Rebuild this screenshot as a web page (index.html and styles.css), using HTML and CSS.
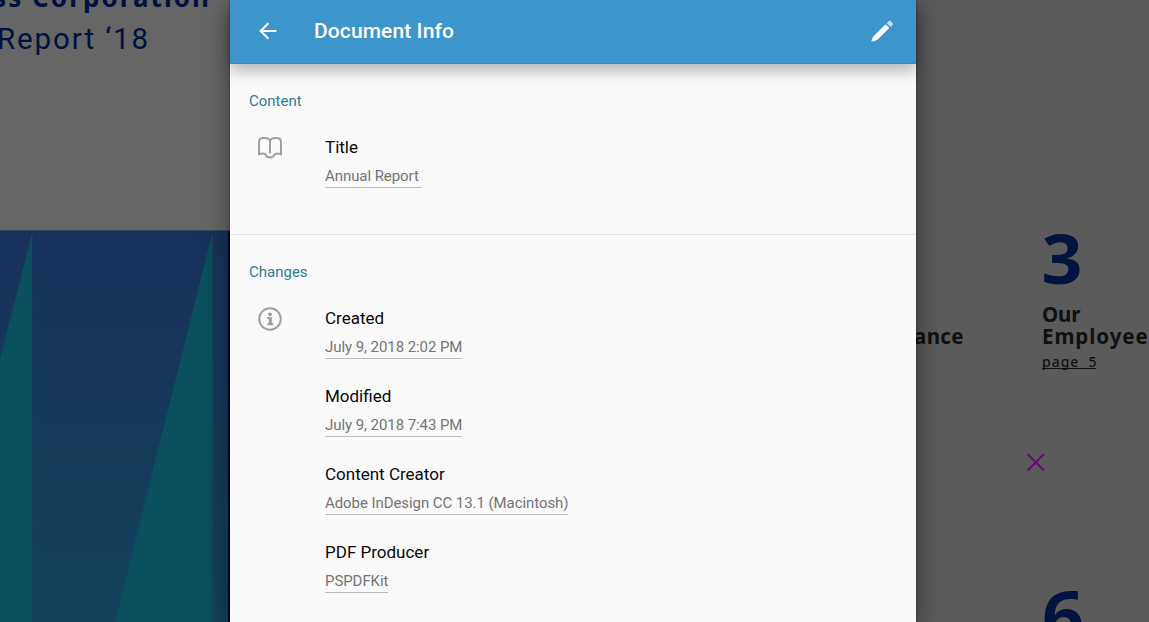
FILE: index.html
```html
<!DOCTYPE html>
<html lang="en">
<head>
<meta charset="utf-8">
<title>Document Info</title>
<link rel="stylesheet" href="styles.css">
</head>
<body>
<div class="screen">
  <svg class="document" viewBox="0 0 1149 622" aria-hidden="true">
    <defs>
      <linearGradient id="cover" x1="0" y1="0" x2="0" y2="1">
        <stop offset="0" stop-color="#19325c"/>
        <stop offset="1" stop-color="#12425b"/>
      </linearGradient>
    </defs>
    <rect width="573" height="622" fill="#666"/>
    <rect x="573" width="576" height="622" fill="#5b5b5b"/>
    <rect y="231" width="229" height="391" fill="url(#cover)"/>
    <rect y="230.400" width="229" height="1.400" fill="#0c3b57"/>
    <rect x="228" y="231" width="2" height="391" fill="#06062e"/>
    <path d="M32.3 232V622H0V359Z M212.5 232V622H115Z" fill="#0b505d"/>
    <text class="doc-text doc-company" x="-7" y="7" textLength="216">ss Corporation</text>
    <text class="doc-text doc-report" x="-3" y="49" textLength="151">Report ‘18</text>
    <text class="doc-text doc-number" x="1041.5" y="283.500" textLength="41" lengthAdjust="spacingAndGlyphs">3</text>
    <text class="doc-text doc-heading" x="914" y="344" textLength="49.500">ance</text>
    <text class="doc-text doc-heading" x="1042" y="322" textLength="38.500">Our</text>
    <text class="doc-text doc-heading" x="1042" y="344" textLength="117">Employees</text>
    <text class="doc-text doc-page" x="1042" y="367" textLength="54.500">page&#160; 5</text>
    <path d="M1042 368.500h54" stroke="#101010" stroke-width="1"/>
    <path d="M1027.5 454l16.5 16.5M1044 454l-16.5 16.5" stroke="#640a70" stroke-width="1.8"/>
    <text class="doc-text doc-number" x="1042" y="640.500" textLength="42" lengthAdjust="spacingAndGlyphs">6</text>
  </svg>
  <main class="panel">
    <header class="toolbar">
      <svg class="back" viewBox="0 0 18 18"><path d="M17.4 9H1.8M9.4 1.2L1.6 9l7.8 7.8"/></svg>
      <h1 class="heading">Document Info</h1>
      <svg class="edit" viewBox="0 0 24 24"><path fill="#fff" d="M1.700 22.400c-.6-.5.900-4.300 2.100-5.500L14.800 5.900a1.200 1.200 0 0 1 1.700 0l2.100 2.100a1.200 1.200 0 0 1 0 1.700L7.600 20.500c-1.500 1.200-5.300 2.500-5.900 1.900z"/><path fill="#bfe2f5" d="M16.800 4.200l1.900-2.300q.8-.8 1.700 0l2.300 2.300q.8.8 0 1.700l-2.100 2z"/></svg>
    </header>
    <section class="section section-content">
      <h2 class="section-title">Content</h2>
      <div class="section-body">
        <svg class="icon" viewBox="0 0 26 24"><path d="M13 16.500V5C12 1.400 9 2 6.500 2S2 3 2 6v12.500c1-1.300 5-1.400 6.400-.1.800 2 2 3 4.600 3s3.800-1 4.600-3c1.400-1.300 5.400-1.200 6.400.1V6c0-3-2-4-4.500-4S14 1.400 13 5"/></svg>
        <dl class="fields">
          <div class="field"><dt class="label">Title</dt><dd class="value value-title">Annual Report</dd></div>
        </dl>
      </div>
    </section>
    <section class="section">
      <h2 class="section-title">Changes</h2>
      <div class="section-body">
        <svg class="icon" viewBox="0 0 26 24"><circle cx="13" cy="12" r="10.8"/><circle class="solid" cx="13" cy="7.300" r="1.900"/><path class="solid" d="M10.300 10.100h4.500v6.200h1.400v1.900h-6v-1.900h1.700v-4.200h-1.600z"/></svg>
        <dl class="fields">
          <div class="field"><dt class="label">Created</dt><dd class="value">July 9, 2018 2:02 PM</dd></div>
          <div class="field"><dt class="label">Modified</dt><dd class="value">July 9, 2018 7:43 PM</dd></div>
          <div class="field"><dt class="label">Content Creator</dt><dd class="value">Adobe InDesign CC 13.1 (Macintosh)</dd></div>
          <div class="field"><dt class="label">PDF Producer</dt><dd class="value">PSPDFKit</dd></div>
        </dl>
      </div>
    </section>
  </main>
</div>
</body>
</html>
```

FILE: styles.css
```css
* { box-sizing: border-box; }
body { margin: 0; overflow: hidden; font-family: Roboto, sans-serif; }
h1, h2, dl, dd { margin: 0; }

.screen { display: grid; width: 1149px; height: 622px; overflow: hidden; }
.document { grid-area: 1 / 1; width: 1149px; height: 622px; }
.doc-text { font-family: "Noto Sans", "Open Sans", sans-serif; }
.doc-company { font-size: 26px; font-weight: 700; fill: #00113f; }
.doc-report { font-family: Roboto, sans-serif; font-size: 29.5px; font-weight: 400; fill: #00113f; }
.doc-number { font-size: 69px; font-weight: 700; fill: #00143f; }
.doc-heading { font-size: 20.5px; font-weight: 700; fill: #101010; }
.doc-page { font-size: 14px; font-weight: 500; fill: #101010; }

.panel {
  grid-area: 1 / 1;
  width: 686px;
  height: 622px;
  margin-left: 230px;
  z-index: 1;
  background: #fafafa;
  box-shadow: 0 0 2px rgba(0, 0, 0, .5), 0 8px 26px rgba(0, 0, 0, .4);
}

.toolbar {
  display: flex;
  align-items: center;
  height: 64px;
  padding: 0 22px 2px 29px;
  background: #3c96cb;
  border-bottom: 1px solid #318bc3;
  box-shadow: 0 7px 14px rgba(0, 0, 0, .28);
}
.back { width: 18px; height: 18px; fill: none; stroke: #fff; stroke-width: 2; }
.heading { margin-left: 37px; color: #fff; font-size: 21px; line-height: 28px; font-weight: 500; letter-spacing: .1px; }
.edit { width: 24px; height: 24px; margin-left: auto; }

.section { padding: 27px 19px 0; }
.section-content { height: 171px; border-bottom: 1px solid #e3e3e3; }
.section-title { color: #327a99; font-size: 15px; line-height: 20px; font-weight: 400; }
.section-body { display: flex; padding: 25px 0 0 8px; }
.icon { width: 26px; height: 24px; fill: none; stroke: #a0a0a0; stroke-width: 2; stroke-linejoin: round; stroke-linecap: round; }
.solid { fill: #9e9e9e; stroke: none; }
.fields { margin: -1px 0 0 42px; }
.field { height: 78px; }
.label { color: #080808; font-size: 17px; line-height: 24px; }
.value { width: fit-content; height: 29px; padding-top: 7px; border-bottom: 1px solid #bdbdbd; color: #747474; font-size: 15px; line-height: 20px; letter-spacing: -.07px; }
.value-title { padding-right: 3px; }
```
